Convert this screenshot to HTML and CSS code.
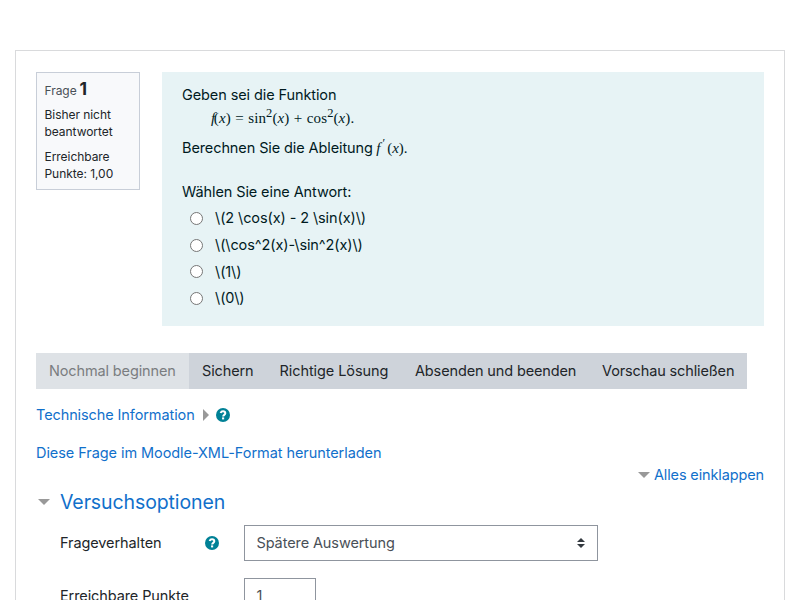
FILE: index.html
```html
<!DOCTYPE html>
<html lang="de">
<head>
<meta charset="utf-8">
<title>Vorschau</title>
<link rel="stylesheet" href="styles.css">
</head>
<body>
<svg class="defs" width="0" height="0" aria-hidden="true">
  <symbol id="help" viewBox="0 0 14 14">
    <circle cx="7" cy="7" r="7" fill="#008196"/>
    <path d="M4.600 5C5 3.900 5.900 3.300 7 3.300c1.300 0 2.300.8 2.300 1.950C9.300 6.950 7.150 6.800 7.150 8.600" fill="none" stroke="#fff" stroke-width="2"/>
    <rect x="6.050" y="9.400" width="2.100" height="2" fill="#fff"/>
  </symbol>
</svg>
<main class="card">
  <div class="question">
    <aside class="info">
      <h3 class="no">Frage <span class="qno">1</span></h3>
      <div class="state">Bisher nicht beantwortet</div>
      <div class="grade">Erreichbare Punkte: 1,00</div>
    </aside>
    <section class="formulation">
      <p class="line intro"><span>Geben sei die Funktion</span></p>
      <p class="line math display"><span><i class="f">f</i>(<i>x</i>) = sin<sup>2</sup>(<i>x</i>) + cos<sup>2</sup>(<i>x</i>).</span></p>
      <p class="line task"><span>Berechnen Sie die Ableitung</span><span class="math inline"><i>f</i><sup class="prime">′</sup>(<i>x</i>).</span></p>
      <p class="line prompt"><span>Wählen Sie eine Antwort:</span></p>
      <div class="answers">
        <label class="answer"><input type="radio" name="a"><span>\(2 \cos(x) - 2 \sin(x)\)</span></label>
        <label class="answer"><input type="radio" name="a"><span>\(\cos^2(x)-\sin^2(x)\)</span></label>
        <label class="answer"><input type="radio" name="a"><span>\(1\)</span></label>
        <label class="answer"><input type="radio" name="a"><span>\(0\)</span></label>
      </div>
    </section>
  </div>
  <div class="buttons">
    <button class="b1" disabled>Nochmal beginnen</button>
    <button class="b2">Sichern</button>
    <button class="b3">Richtige Lösung</button>
    <button class="b4">Absenden und beenden</button>
    <button class="b5">Vorschau schließen</button>
  </div>
  <div class="tech">
    <a class="tech-link">Technische Information</a>
    <svg class="tri-right" width="6" height="12" viewBox="0 0 6 12"><path d="M0 0L6 6L0 12Z" fill="#999"/></svg>
    <svg class="help" width="14" height="14"><use href="#help"/></svg>
  </div>
  <div class="download"><a>Diese Frage im Moodle-XML-Format herunterladen</a></div>
  <div class="collapse">
    <svg width="12" height="6" viewBox="0 0 12 6"><path d="M0 0H12L6 6Z" fill="#999"/></svg>
    <a>Alles einklappen</a>
  </div>
  <div class="legend">
    <svg width="12" height="6" viewBox="0 0 12 6"><path d="M0 0H12L6 6Z" fill="#999"/></svg>
    <a>Versuchsoptionen</a>
  </div>
  <div class="row">
    <span class="label l1">Frageverhalten</span>
    <svg class="help" width="14" height="14"><use href="#help"/></svg>
    <div class="field select"><span>Spätere Auswertung</span>
      <svg width="8" height="10" viewBox="0 0 8 10"><path d="M0 4L4 0L8 4ZM0 6H8L4 10Z" fill="#343a40"/></svg>
    </div>
  </div>
  <div class="row">
    <span class="label l2">Erreichbare Punkte</span>
    <div class="field number">1</div>
  </div>
</main>
</body>
</html>
```
FILE: styles.css
```css
* { box-sizing: border-box; }
html { overflow: hidden; }
body {
  margin: 0;
  height: 600px;
  overflow: hidden;
  background: #fff;
  color: #212529;
  font: 14.500px/22px Inter, "Liberation Sans", sans-serif;
  letter-spacing: -0.100px;
}
.defs { display: block; }
.card {
  margin: 50px 15px 0;
  height: 550px;
  overflow: hidden;
  padding: 21px 20px 0;
  border: 1px solid #d9dadc;
  border-bottom: 0;
}
a { color: #1170cb; }
p, h3 { margin: 0; font-weight: 400; }
svg { flex: none; }

.question { display: flex; justify-content: space-between; height: 254px; }
.info {
  width: 104px;
  height: 118px;
  padding: 7px 7.500px;
  border: 1px solid #c8ced8;
  background: #f8f9fb;
  font-size: 12px;
  line-height: 17px;
  letter-spacing: -0.050px;
}
.no { font-size: 12px; line-height: 20px; color: #495057; }
.qno { font-size: 17.500px; font-weight: 700; color: #212529; line-height: 18px; margin-left: -0.500px; }
.state { margin-top: 5px; }
.grade { margin-top: 8px; }
.formulation {
  width: 602px;
  padding: 12px 20px 0;
  background: #e7f3f5;
  color: #001a1e;
}
.line { display: flex; white-space: nowrap; height: 22px; }
.math { font-family: "Liberation Serif", serif; font-size: 15px; letter-spacing: 0; }
.math sup { font-size: 12px; line-height: 0; vertical-align: 5px; }
.display { margin-left: 29px; margin-top: 1px; letter-spacing: 0.100px; word-spacing: 0.600px; }
.display sup { font-size: 12.500px; vertical-align: 6px; }
.f { margin-right: -1.500px; }
.task { margin-top: 8px; }
.inline { margin-left: 3.500px; }
.math .prime { margin: 0 2px; vertical-align: 6px; }
.prompt { margin-top: 22px; }
.answers { margin: 2px 0 0 8px; }
.answer { display: flex; align-items: center; height: 26.700px; white-space: nowrap; }
.answer input {
  appearance: none;
  width: 13px;
  height: 13px;
  margin: 0 12px 0 0;
  border: 1px solid #767676;
  border-radius: 50%;
  background: #fff;
}

.buttons { display: flex; width: 711px; margin-top: 27px; background: #ced3da; }
button {
  height: 36px;
  padding: 0 0 0 13px;
  border: 0;
  background: #ced3da;
  color: #212529;
  font: inherit;
  letter-spacing: -0.130px;
  text-align: left;
  white-space: nowrap;
}
button:disabled { background: #dee2e6; color: #7a7d80; }
.b1 { width: 153px; }
.b2 { width: 77.500px; }
.b3 { width: 135.500px; letter-spacing: -0.080px; }
.b4 { width: 187px; }
.b5 { width: 158px; }

.tech { display: flex; align-items: center; height: 22px; margin-top: 15px; }
.tech-link { width: 167px; white-space: nowrap; }
.tech .help { margin-left: 7px; }
.download { margin-top: 16px; height: 22px; letter-spacing: -0.070px; }
.collapse { display: flex; align-items: center; justify-content: flex-end; gap: 4px; height: 22px; }
.collapse a { letter-spacing: -0.130px; }
.collapse svg, .legend svg { position: relative; top: -0.500px; }
.legend {
  display: flex;
  align-items: center;
  gap: 10px;
  height: 32px;
  padding-left: 2px;
  font-size: 19.500px;
}
.row { display: flex; align-items: center; height: 36px; margin: 7px 0 17px; padding-left: 24px; }
.label { width: 144.500px; white-space: nowrap; }
.row .help { margin-right: 25.500px; }
.field {
  height: 36px;
  padding: 0 12px 0 11.500px;
  border: 1px solid #8f959e;
  color: #495057;
  display: flex;
  align-items: center;
}
.select { width: 354px; justify-content: space-between; }
.l2 { width: 184px; }
.number { width: 72px; }
```
